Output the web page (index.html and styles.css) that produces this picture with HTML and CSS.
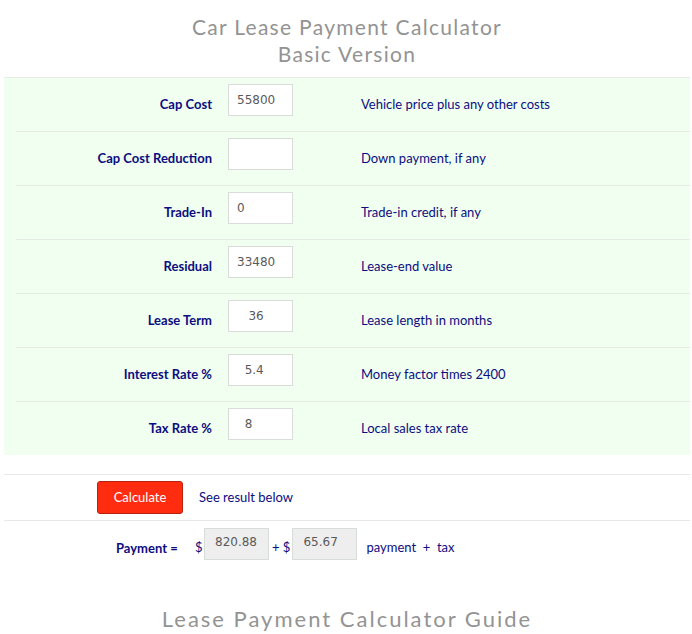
FILE: index.html
```html
<!DOCTYPE html>
<html>
<head>
<meta charset="utf-8">
<link rel="stylesheet" href="styles.css">
</head>
<body>
<div class="page">
  <h1 class="title">Car Lease Payment Calculator<br>Basic Version</h1>
  <div class="form">
    <div class="row">
      <div class="label">Cap Cost</div>
      <div class="field"><input class="inp" type="text" value="55800"></div>
      <div class="desc">Vehicle price plus any other costs</div>
    </div>
    <div class="row">
      <div class="label">Cap Cost Reduction</div>
      <div class="field"><input class="inp" type="text" value=""></div>
      <div class="desc">Down payment, if any</div>
    </div>
    <div class="row">
      <div class="label">Trade-In</div>
      <div class="field"><input class="inp" type="text" value="0"></div>
      <div class="desc">Trade-in credit, if any</div>
    </div>
    <div class="row">
      <div class="label">Residual</div>
      <div class="field"><input class="inp" type="text" value="33480"></div>
      <div class="desc">Lease-end value</div>
    </div>
    <div class="row">
      <div class="label">Lease Term</div>
      <div class="field"><input class="inp" type="text" value="   36"></div>
      <div class="desc">Lease length in months</div>
    </div>
    <div class="row">
      <div class="label">Interest Rate %</div>
      <div class="field"><input class="inp" type="text" value="  5.4"></div>
      <div class="desc">Money factor times 2400</div>
    </div>
    <div class="row last">
      <div class="label">Tax Rate %</div>
      <div class="field"><input class="inp" type="text" value="  8"></div>
      <div class="desc">Local sales tax rate</div>
    </div>
  </div>
  <div class="actions">
    <button class="btn" type="button">Calculate</button>
    <span class="note">See result below</span>
  </div>
  <div class="result">
    <span class="plabel">Payment =</span>
    <span class="sym dollar">$</span>
    <input class="out" type="text" value="820.88" readonly>
    <span class="sym plus">+ $</span>
    <input class="out" type="text" value="65.67" readonly>
    <span class="sym tail">payment &nbsp;+&nbsp; tax</span>
  </div>
  <h2 class="guide">Lease Payment Calculator Guide</h2>
</div>
</body>
</html>
```
FILE: styles.css
```css
html, body {
  margin: 0;
  padding: 0;
  background: #ffffff;
}
body {
  font-family: Lato, "Open Sans", sans-serif;
  font-size: 13px;
  color: #0d0d80;
}
.page {
  padding: 0 2px 0 4px;
}
.title {
  margin: 0;
  padding-top: 13px;
  height: 64px;
  font-size: 21px;
  line-height: 27px;
  font-weight: 400;
  letter-spacing: 1.3px;
  color: #939393;
  text-align: center;
}
.form {
  background: #f0fff0;
  border-top: 1px solid #e6ece6;
}
.row {
  display: grid;
  grid-template-columns: 196px 149px 1fr;
  align-items: center;
  height: 53px;
  margin-left: 12px;
  border-bottom: 1px solid #e4ece4;
}
.row.last {
  border-bottom: none;
  height: 53px;
}
.label {
  text-align: right;
  font-weight: 700;
  padding-bottom: 2px;
}
.desc {
  padding-bottom: 2px;
}
.field {
  padding-left: 16px;
  align-self: start;
  padding-top: 6px;
}
.inp, .out {
  box-sizing: border-box;
  width: 65px;
  height: 32px;
  border: 1px solid #d9ddd9;
  background: #ffffff;
  padding: 0 0 1px 8px;
  font-family: "DejaVu Sans", Verdana, sans-serif;
  font-size: 12px;
  color: #5a5a5a;
  outline: none;
  white-space: pre;
  display: block;
}
.actions {
  display: flex;
  align-items: center;
  margin-top: 19px;
  height: 45px;
  border-top: 1px solid #e8e8e8;
  border-bottom: 1px solid #e8e8e8;
  padding-left: 93px;
}
.btn {
  box-sizing: border-box;
  width: 86px;
  height: 33px;
  background: #ff2c10;
  border: 1px solid #b8220e;
  border-radius: 3px;
  color: #ffffff;
  font-family: Lato, sans-serif;
  font-size: 13px;
  padding: 0 0 2px 0;
  margin-right: 16px;
}
.note {
  padding-bottom: 2px;
}
.result {
  display: flex;
  align-items: center;
  padding: 6px 0 0 112px;
  height: 34px;
}
.out {
  background: #eeeeee;
  padding: 0 0 4px 10px;
}
.plabel {
  font-weight: 700;
  width: 79px;
  padding-top: 8px;
}
.sym {
  padding-top: 6px;
}
.dollar {
  margin-right: 1px;
  width: 8px;
}
.plus {
  margin: 0 2px 0 3px;
}
.tail {
  margin-left: 9px;
}
.guide {
  margin: 0;
  padding-top: 44px;
  font-size: 22px;
  line-height: 28px;
  font-weight: 400;
  letter-spacing: 2px;
  color: #939393;
  text-align: center;
}
```
